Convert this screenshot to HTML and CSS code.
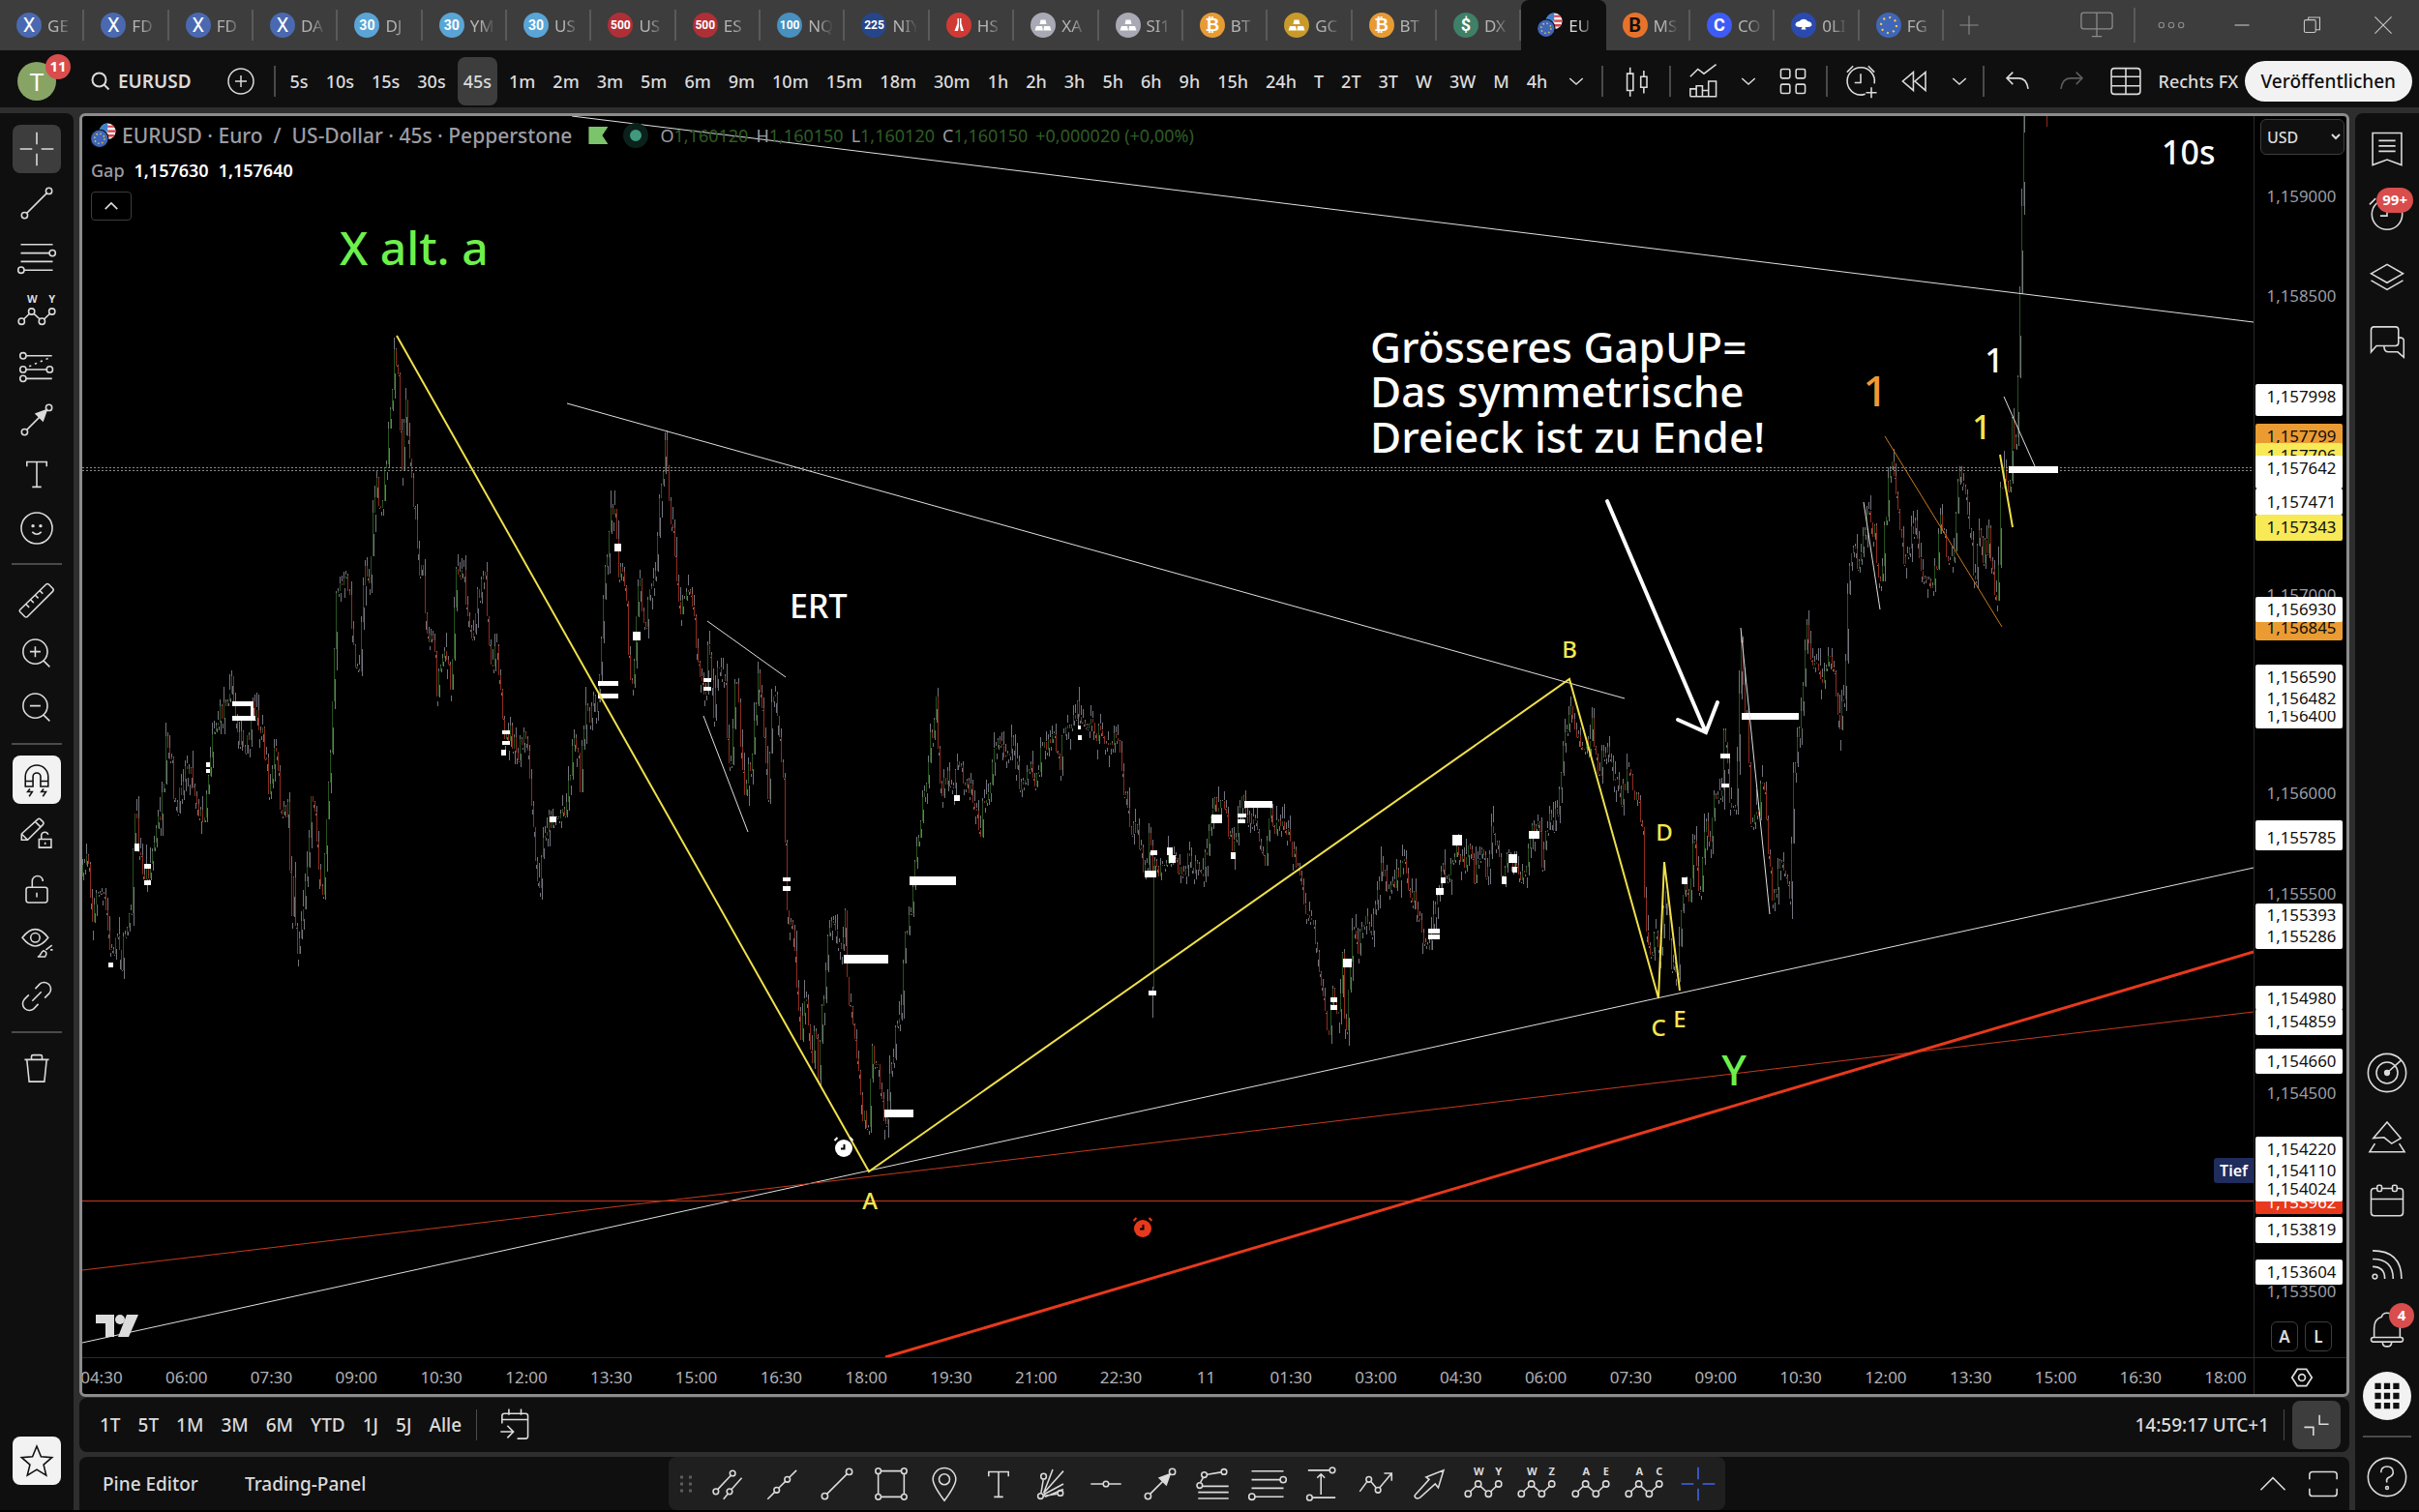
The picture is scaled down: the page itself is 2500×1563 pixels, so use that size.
FILE: index.html
```
<!DOCTYPE html>
<html lang="de">
<head>
  <meta charset="UTF-8">
  <meta name="viewport" content="width=device-width, initial-scale=1.0">
  <title>EURUSD 1,157642 – Rechts FX</title>
  <link rel="stylesheet" href="styles.css">
</head>
<body>

<!-- Icons -->
<svg class="sprite" aria-hidden="true">
  <symbol id="i-cross" viewBox="0 0 28 28"><path d="M14 3v8M14 17v8M3 14h8M17 14h8"/></symbol>
  <symbol id="i-line" viewBox="0 0 28 28"><circle cx="6" cy="22" r="2"/><circle cx="22" cy="6" r="2"/><path d="M7.4 20.6 20.6 7.4"/></symbol>
  <symbol id="i-fib" viewBox="0 0 28 28"><path d="M3.5 5.6h21M3.5 11.2h19M3.5 16.8h21M5.5 22.4h19"/><circle cx="24.3" cy="11.2" r="2"/><circle cx="3.7" cy="22.4" r="2"/></symbol>
  <symbol id="i-wave" viewBox="0 0 28 28"><circle cx="4" cy="20.5" r="2"/><circle cx="10.6" cy="14" r="2"/><circle cx="17.4" cy="20.5" r="2"/><circle cx="24" cy="14" r="2"/><path d="m5.4 19.1 3.8-3.7M12 15.4l4 3.7M18.8 19.1l3.8-3.7"/></symbol>
  <symbol id="i-proj" viewBox="0 0 28 28"><circle cx="5" cy="7.5" r="2"/><circle cx="5" cy="16.5" r="2"/><circle cx="5" cy="22.5" r="2"/><circle cx="22.5" cy="16.5" r="2"/><path d="M7 7.5h17M7 16.5h13.5M7 22.5h17"/><path d="M9 14.5 23 8.5" stroke-dasharray="1.5 2.5"/></symbol>
  <symbol id="i-arrow" viewBox="0 0 28 28"><circle cx="6" cy="22" r="2"/><circle cx="22" cy="6" r="2"/><path d="M7.4 20.6 20.6 7.4"/><path d="m20.5 7.5-7 2.5 4.5 4.5z" fill="currentColor"/></symbol>
  <symbol id="i-text" viewBox="0 0 28 28"><path d="M7.5 9V6h13v3M14 6v16.5M11 22.5h6"/></symbol>
  <symbol id="i-smile" viewBox="0 0 28 28"><circle cx="14" cy="14" r="10.2"/><path d="M11 16.5q3 3 6 0"/><circle cx="11.5" cy="12.5" r=".6" fill="currentColor"/><circle cx="16.5" cy="12.5" r=".6" fill="currentColor"/></symbol>
  <symbol id="i-ruler" viewBox="0 0 28 28"><path d="m3 20.500 17-16.500q1-1 2 0l2.500 2.500q1 1 0 2L8 25q-1 1-2 0l-3-3q-.7-.8 0-1.500zM7 17l2 2M10 14l2 2M13 11l2 2M16 8l2 2"/></symbol>
  <symbol id="i-zoomin" viewBox="0 0 28 28"><circle cx="13" cy="12.500" r="8"/><path d="m18.500 18.500 4 4M13 9v7M9.500 12.500h7"/></symbol>
  <symbol id="i-zoomout" viewBox="0 0 28 28"><circle cx="13" cy="12.500" r="8"/><path d="m18.500 18.500 4 4M9.500 12.500h7"/></symbol>
  <symbol id="i-magnet" viewBox="0 0 28 28"><path d="M6.500 18.500V12a7.500 7.500 0 0 1 15 0v6.500h-5V12a2.500 2.500 0 0 0-5 0v6.500zM6.500 15h5M16.500 15h5M9.500 20l-1.500 2h3l-2 3M18.500 20l-1.500 2h3l-2 3"/></symbol>
  <symbol id="i-penlock" viewBox="0 0 28 28"><path d="M4 14 14.500 4.500q1-1 2 0l1.500 1.500q1 1 0 2L8 18H4zM4 14l4 4M13 6l3.500 3.500M15.500 17.500h8v5.500h-8zM17 17.500v-2.500a2.300 2.300 0 0 1 4.500-.5M19.500 19.500v1.500"/></symbol>
  <symbol id="i-lock" viewBox="0 0 28 28"><rect x="7" y="13.500" width="14" height="10" rx="1.500"/><path d="M11 13.500V9.500a3.500 3.500 0 0 1 7 0M14 17v3"/></symbol>
  <symbol id="i-eye" viewBox="0 0 28 28"><path d="M4.500 11Q13 0 21.500 11 13 22 4.500 11z"/><circle cx="13" cy="11" r="3"/><path d="M14.500 23.500c2 0 2-3 4-4q3 1 1 4zM20 19l4-3M23 19h1.500"/></symbol>
  <symbol id="i-link" viewBox="0 0 28 28"><path d="m11 17 6-6M13 9l3-3.200a4.400 4.400 0 0 1 6.200 6.200l-3 3M15 19l-3 3.200A4.400 4.400 0 0 1 5.800 16l3-3"/></symbol>
  <symbol id="i-trash" viewBox="0 0 28 28"><path d="M6 8.500h16M10.500 8.500v-2q0-1 1-1h5q1 0 1 1v2M7.500 8.500 9 23h10l1.500-14.500"/></symbol>
  <symbol id="i-star" viewBox="0 0 28 28"><path d="m14 4.500 2.800 6.800 7.200.6-5.500 4.700 1.700 7-6.200-3.800-6.200 3.800 1.700-7L4 11.900l7.200-.6z"/></symbol>
  <symbol id="i-chev" viewBox="0 0 16 16"><path d="m3.500 6 4.500 4 4.500-4"/></symbol>
  <symbol id="i-up" viewBox="0 0 28 28"><path d="m6 18 8-8 8 8"/></symbol>
  <symbol id="i-search" viewBox="0 0 20 20"><circle cx="8.500" cy="8.500" r="7"/><path d="m13.500 13.500 5 5"/></symbol>
  <symbol id="i-plus" viewBox="0 0 28 28"><circle cx="14" cy="14" r="13"/><path d="M14 8v12M8 14h12"/></symbol>
  <symbol id="i-candle" viewBox="0 0 28 28"><path d="M8 9h4v11H8zM10 5v4M10 20v4M17 11h4v7h-4zM19 7v4M19 18v4"/></symbol>
  <symbol id="i-indic" viewBox="0 0 28 28"><path d="m5 11 5-5 4 3 8-6M5 24v-5h4v5M9 24v-7h4v7M13 24v-4h4v4M17 24V14h5v10zM5 24h13"/></symbol>
  <symbol id="i-grid" viewBox="0 0 28 28"><rect x="6" y="6" width="6" height="6" rx="1"/><rect x="16" y="6" width="6" height="6" rx="1"/><rect x="6" y="16" width="6" height="6" rx="1"/><rect x="16" y="16" width="6" height="6" rx="1"/></symbol>
  <symbol id="i-alarm" viewBox="0 0 28 28"><path d="M17 22.500a9 9 0 1 1 6-7M14 9v6h-4M5 8l4-4M23 8l-4-4M21 18v7M17.500 21.500h7"/></symbol>
  <symbol id="i-rewind" viewBox="0 0 28 28"><path d="m13 8-7 6 7 6zM21 8l-7 6 7 6z"/></symbol>
  <symbol id="i-undo" viewBox="0 0 28 28"><path d="m11 8-4 4 4 4M7 12h8q5 0 6 7"/></symbol>
  <symbol id="i-redo" viewBox="0 0 28 28"><path d="m17 8 4 4-4 4M21 12h-8q-5 0-6 7"/></symbol>
  <symbol id="i-layout" viewBox="0 0 28 28"><rect x="4.500" y="5.500" width="19" height="17" rx="2"/><path d="M14 5.500v17M4.500 11h19M4.500 17h19"/></symbol>
  <symbol id="i-list" viewBox="0 0 28 28"><path d="M4.500 3.500h19v21L14 21l-9.500 3.500zM8.500 8.500h11M8.500 12h11M8.500 15.500h11"/></symbol>
  <symbol id="i-clock" viewBox="0 0 28 28"><circle cx="14" cy="15" r="10"/><path d="M14 10v6H9.500M2.500 8.500l4-4M25.500 8.500l-4-4"/></symbol>
  <symbol id="i-layers" viewBox="0 0 28 28"><path d="m3.500 12 10.500-6 10.500 6L14 18zM3.500 16.500 14 22.500l10.500-6"/></symbol>
  <symbol id="i-chat" viewBox="0 0 28 28"><path d="M3.500 21.500V7q0-2 2-2h14q2 0 2 2v8.500q0 2-2 2H7zM21.500 12q3.500 0 3.500 2v11l-4-3.500h-6q-3 0-3-4"/></symbol>
  <symbol id="i-radar" viewBox="0 0 28 28"><circle cx="14" cy="14" r="12.500"/><circle cx="14" cy="14" r="7"/><circle cx="14" cy="14" r="1.500" fill="currentColor"/><path d="m14 14 9-8"/></symbol>
  <symbol id="i-hill" viewBox="0 0 28 28"><path d="m5 15 9-10.500L23 15 17 18.500l-5-4zM6 18.500 2.500 24h23L22 18.500"/></symbol>
  <symbol id="i-cal" viewBox="0 0 28 28"><rect x="3.500" y="6" width="21" height="18" rx="2"/><path d="M3.500 13h21"/><rect x="7.500" y="4" width="3" height="4" rx="1" fill="#0f0f0f"/><rect x="17.500" y="4" width="3" height="4" rx="1" fill="#0f0f0f"/></symbol>
  <symbol id="i-feed" viewBox="0 0 28 28"><circle cx="6" cy="22" r="1.500"/><path d="M4.500 15.500q8 0 8 8M4.500 10.500q13.500 0 13.500 13M4.500 5q19 0 19 18.500"/></symbol>
  <symbol id="i-bell" viewBox="0 0 28 28"><path d="M5.500 20v-6q0-6 5-7.500Q11 4 14 4t3.500 2.500q5 1.500 5 7.500v6"/><rect x="3.500" y="20" width="21" height="3" rx="1.500"/><path d="M11 23q0 3 3 3t3-3"/></symbol>
  <symbol id="i-help" viewBox="0 0 28 28"><circle cx="14" cy="14" r="12.500"/><path d="M10 11q0-4 4-4t4 4q0 2-2.500 3T14 17.500"/><circle cx="14" cy="21" r=".9"/></symbol>
  <symbol id="i-goto" viewBox="0 0 28 28"><path d="M5 13V8q0-1.500 1.500-1.500h14Q22 6.500 22 8v13.500q0 1.500-1.500 1.500H15M5 10.500h17M9.500 3.500v4M17.500 3.500v4M4 18.500h8M8.500 14.500l4 4-4 4"/></symbol>
  <symbol id="i-min" viewBox="0 0 28 28"><path d="M16 7.500v6h6M12 21v-5.500H6"/></symbol>
  <symbol id="i-full" viewBox="0 0 28 28"><path d="M5 11V8q0-2 2-2h14q2 0 2 2v3M5 17v3q0 2 2 2h14q2 0 2-2v-3"/></symbol>
  <symbol id="i-channel" viewBox="0 0 28 28"><circle cx="5" cy="19" r="1.800"/><circle cx="16" cy="7" r="1.800"/><circle cx="14" cy="19" r="1.800"/><path d="m6.200 17.600 8.600-9.200M10 24l3-3.600M15.200 17.600 22 10"/></symbol>
  <symbol id="i-ray" viewBox="0 0 28 28"><circle cx="10" cy="18" r="1.800"/><circle cx="17" cy="11" r="1.800"/><path d="m4 24 4.700-4.700M11.300 16.700l4.400-4.400M18.300 9.700 23 5"/></symbol>
  <symbol id="i-rect" viewBox="0 0 28 28"><path d="M7.500 5.500h13M7.500 22.500h13M5.500 7.500v13M22.500 7.500v13"/><circle cx="5.500" cy="5.500" r="1.800"/><circle cx="22.500" cy="5.500" r="1.800"/><circle cx="5.500" cy="22.500" r="1.800"/><circle cx="22.500" cy="22.500" r="1.800"/></symbol>
  <symbol id="i-pin" viewBox="0 0 28 28"><path d="M14 25Q6.500 15 6.500 11a7.500 7.500 0 0 1 15 0Q21.500 15 14 25z"/><circle cx="14" cy="11" r="3.500"/></symbol>
  <symbol id="i-fan" viewBox="0 0 28 28"><circle cx="6" cy="22" r="1.800"/><circle cx="8" cy="9" r="1.800"/><circle cx="19" cy="20" r="1.800"/><path d="M6.300 20 7.800 11M8 20 14 4.500M8 20 21 5.500M8 21 21 14M8 22l9-1.500M9 22.500l12-5"/></symbol>
  <symbol id="i-hray" viewBox="0 0 28 28"><circle cx="14" cy="14" r="1.800"/><path d="M4 14h8M16 14h8"/></symbol>
  <symbol id="i-fibx" viewBox="0 0 28 28"><circle cx="5" cy="15" r="1.800"/><circle cx="8" cy="8" r="1.800"/><circle cx="21" cy="6" r="1.800"/><path d="M10 7.800l9-1.500M5.500 13l2-3.500M7 15.500h17M4 19.500h20M4 23.500h20"/></symbol>
  <symbol id="i-range" viewBox="0 0 28 28"><circle cx="21" cy="5" r="1.800"/><circle cx="6" cy="23" r="1.800"/><path d="M5 5h14M8 23h15M13.500 7.500V21M11 10l2.500-2.500L16 10"/></symbol>
  <symbol id="i-zig" viewBox="0 0 28 28"><circle cx="10" cy="11" r="1.800"/><circle cx="16" cy="18" r="1.800"/><path d="m4 19 4.800-6.500M11.500 12.500l3.300 4M17 16.500 25 7M20 7h5v5"/></symbol>
  <symbol id="i-fat" viewBox="0 0 28 28"><path d="M5 23q-1-1 0-2l9-10-2-1.500L23.500 5 20 16.500 18 14 8 23q-2 1-3 0z"/></symbol>
  <symbol id="i-alarmdot" viewBox="0 0 24 24"><circle cx="12" cy="13" r="9" fill="currentColor" stroke="none"/><path d="M12.500 9v4.500H9" stroke="#000" stroke-width="2"/><path d="m2.500 5 3-3M21.500 5l-3-3" stroke-width="2"/></symbol>
  <symbol id="i-eu" viewBox="0 0 26 26"><circle cx="13" cy="13" r="13" fill="#3f66b8" stroke="none"/><circle cx="13" cy="13" r="8" stroke="#f2c94c" stroke-width="2.200" stroke-dasharray="2 4.280"/></symbol>
  <symbol id="i-eurusd" viewBox="0 0 28 28"><g stroke="none"><circle cx="18.500" cy="9.500" r="9" fill="#eee"/><path d="M18.500 3h6.200l1.700 2.200h-8zM18.500 8h9v2.500h-9zM18.500 13h8l-1.500 2.500h-6.500z" fill="#d9434a"/><path d="M18.500.5v9h-9a9 9 0 0 1 9-9z" fill="#3f7fd0"/><circle cx="9.500" cy="17.500" r="10.500" fill="#0f0f0f"/><circle cx="9.500" cy="17.500" r="9.300" fill="#3f66b8"/></g><circle cx="9.500" cy="17.500" r="5.500" stroke="#f2c94c" stroke-width="1.600" stroke-dasharray="1.500 2.820"/></symbol>
  <symbol id="i-bars" viewBox="0 0 26 26"><path d="M10.500 7.500h5l1 4.500h-7zM6 14h6l1 4.500H4.500zM14 14h6l1.500 4.500h-8z" fill="#fff" stroke="none"/></symbol>
</svg>

<nav class="tabbar" aria-label="Tabs">
  <div class="tabs">
    <a class="tab" href="#"><i class="coin x">X</i><span>GE</span></a>
    <a class="tab" href="#"><i class="coin x">X</i><span>FD</span></a>
    <a class="tab" href="#"><i class="coin x">X</i><span>FD</span></a>
    <a class="tab" href="#"><i class="coin x">X</i><span>DA</span></a>
    <a class="tab" href="#"><i class="coin dow">30</i><span>DJ</span></a>
    <a class="tab" href="#"><i class="coin dow">30</i><span>YM</span></a>
    <a class="tab" href="#"><i class="coin dow">30</i><span>US</span></a>
    <a class="tab" href="#"><i class="coin spx">500</i><span>US</span></a>
    <a class="tab" href="#"><i class="coin spx">500</i><span>ES</span></a>
    <a class="tab" href="#"><i class="coin ndx">100</i><span>NQ</span></a>
    <a class="tab" href="#"><i class="coin nik">225</i><span>NIY</span></a>
    <a class="tab" href="#"><i class="coin hsi"><svg class="coin-svg" viewBox="0 0 26 26"><path d="M11.500 6v5l-3 8h3.500l1-5V6zM14 6v8l1 5h3l-2.500-8V6z" fill="#fff" stroke="none"/></svg></i><span>HS</span></a>
    <a class="tab" href="#"><i class="coin silver"><svg class="coin-svg"><use href="#i-bars"/></svg></i><span>XA</span></a>
    <a class="tab" href="#"><i class="coin silver"><svg class="coin-svg"><use href="#i-bars"/></svg></i><span>SI1</span></a>
    <a class="tab" href="#"><i class="coin btc">₿</i><span>BT</span></a>
    <a class="tab" href="#"><i class="coin gold"><svg class="coin-svg"><use href="#i-bars"/></svg></i><span>GC</span></a>
    <a class="tab" href="#"><i class="coin btc">₿</i><span>BT</span></a>
    <a class="tab" href="#"><i class="coin dxy">$</i><span>DX</span></a>
    <a class="tab active" href="#" aria-current="page"><svg class="pair"><use href="#i-eurusd"/></svg><span>EU</span></a>
    <a class="tab" href="#"><i class="coin mst">B</i><span>MS</span></a>
    <a class="tab" href="#"><i class="coin cb">C</i><span>CO</span></a>
    <a class="tab" href="#"><i class="coin oil"><svg class="coin-svg" viewBox="0 0 26 26"><path d="M4.500 13q0-3.500 4-4 4.500-4.500 9 0 4 .5 4 4-1 2-4 2h-3l1 2.500h-5l1-2.500h-3q-3 0-4-2z" fill="#fff" stroke="none"/></svg></i><span>0LI</span></a>
    <a class="tab" href="#"><i class="coin"><svg class="coin-svg"><use href="#i-eu"/></svg></i><span>FG</span></a>
  </div>
  <div class="window-tools">
    <button aria-label="Neuer Tab"><svg viewBox="0 0 28 28"><path d="M14 5v18M5 14h18"/></svg></button>
    <button class="screen" aria-label="Bildschirm"><svg viewBox="0 0 28 28"><rect x="1.500" y="4" width="25" height="13" rx="2"/><path d="M14 4v19M10 23h8"/></svg></button>
    <button aria-label="Mehr"><svg viewBox="0 0 28 28"><circle cx="4.500" cy="14" r="2.500"/><circle cx="14" cy="14" r="2.500"/><circle cx="23.500" cy="14" r="2.500"/></svg></button>
    <button class="win" aria-label="Minimieren"><svg viewBox="0 0 28 28"><path d="M7 14h14"/></svg></button>
    <button class="win" aria-label="Wiederherstellen"><svg viewBox="0 0 28 28"><rect x="6" y="9" width="11" height="12" rx="1.500"/><path d="M10 9V6.500h11v12h-4"/></svg></button>
    <button class="win" aria-label="Schließen"><svg viewBox="0 0 28 28"><path d="m6 6 16 16M22 6 6 22"/></svg></button>
  </div>
</nav>

<header class="toolbar">
  <button class="avatar" aria-label="Konto">T<span class="badge">11</span></button>
  <button class="symbol"><svg><use href="#i-search"/></svg>EURUSD</button>
  <button class="compare" aria-label="Vergleichen"><svg><use href="#i-plus"/></svg></button>
  <span class="sep"></span>
  <div class="intervals">
    <button>5s</button><button>10s</button><button>15s</button><button>30s</button><button class="on">45s</button><button>1m</button><button>2m</button><button>3m</button><button>5m</button><button>6m</button><button>9m</button><button>10m</button><button>15m</button><button>18m</button><button>30m</button><button>1h</button><button>2h</button><button>3h</button><button>5h</button><button>6h</button><button>9h</button><button>15h</button><button>24h</button><button>T</button><button>2T</button><button>3T</button><button>W</button><button>3W</button><button>M</button><button>4h</button>
    <button class="chev" aria-label="Mehr Intervalle"><svg><use href="#i-chev"/></svg></button>
  </div>
  <div class="tools">
    <span class="sep"></span>
    <button class="ico" aria-label="Kerzen"><svg><use href="#i-candle"/></svg></button>
    <span class="sep"></span>
    <button class="ico" aria-label="Indikatoren"><svg><use href="#i-indic"/></svg></button>
    <button class="chev" aria-label="Favoriten"><svg><use href="#i-chev"/></svg></button>
    <button class="ico" aria-label="Vorlagen"><svg><use href="#i-grid"/></svg></button>
    <span class="sep"></span>
    <button class="ico" aria-label="Alarm"><svg><use href="#i-alarm"/></svg></button>
    <button class="ico" aria-label="Replay"><svg><use href="#i-rewind"/></svg></button>
    <button class="chev" aria-label="Replay-Menü"><svg><use href="#i-chev"/></svg></button>
    <span class="sep"></span>
    <button class="ico" aria-label="Rückgängig"><svg><use href="#i-undo"/></svg></button>
    <button class="ico dim" aria-label="Wiederholen"><svg><use href="#i-redo"/></svg></button>
    <button class="ico" aria-label="Layout"><svg><use href="#i-layout"/></svg></button>
    <button class="layout-name">Rechts FX</button>
  </div>
  <button class="publish">Veröffentlichen</button>
</header>

<main class="workspace">
  <aside class="drawbar">
    <button class="on" aria-label="Fadenkreuz"><svg><use href="#i-cross"/></svg></button>
    <button aria-label="Trendlinie"><svg><use href="#i-line"/></svg></button>
    <button aria-label="Fibonacci"><svg><use href="#i-fib"/></svg></button>
    <button aria-label="Wellen"><svg viewBox="0 0 28 28"><use href="#i-wave"/><text class="wave-label" x="11" y="8">W</text><text class="wave-label" x="24" y="8">Y</text></svg></button>
    <button aria-label="Projektion"><svg><use href="#i-proj"/></svg></button>
    <button aria-label="Pfeil"><svg><use href="#i-arrow"/></svg></button>
    <button aria-label="Text"><svg><use href="#i-text"/></svg></button>
    <button aria-label="Symbole"><svg><use href="#i-smile"/></svg></button>
    <hr>
    <button aria-label="Messen"><svg><use href="#i-ruler"/></svg></button>
    <button aria-label="Vergrößern"><svg><use href="#i-zoomin"/></svg></button>
    <button aria-label="Verkleinern"><svg><use href="#i-zoomout"/></svg></button>
    <hr>
    <button class="lit" aria-label="Magnet"><svg><use href="#i-magnet"/></svg></button>
    <button aria-label="Zeichenmodus"><svg><use href="#i-penlock"/></svg></button>
    <button aria-label="Sperren"><svg><use href="#i-lock"/></svg></button>
    <button aria-label="Verbergen"><svg><use href="#i-eye"/></svg></button>
    <button aria-label="Verknüpfen"><svg><use href="#i-link"/></svg></button>
    <hr>
    <button aria-label="Löschen"><svg><use href="#i-trash"/></svg></button>
    <button class="lit last" aria-label="Favoriten"><svg><use href="#i-star"/></svg></button>
  </aside>

  <section class="center">
    <div class="chart">
      <div class="plot-wrap">
        <svg class="plot" viewBox="85 120 2244 1283" preserveAspectRatio="none">
          <g id="candles"></g>
          <g class="dots"><path d="M85 483.500H2329M85 486.500H2329"/></g>
          <g id="gaps"></g>
          <g class="w">
            <path d="M591 120 2329 333M586 417 1679 722M85 1388 2329 897"/>
            <path d="M731 642 812 700M727 740 773 860M1799 649 1829 945M1926 519 1943 630M2071 410 2103 482"/>
          </g>
          <path class="red" d="M85 1313 2329 1046M85 1241.500H2329"/>
          <path class="red thick" d="M915 1403 2329 984"/>
          <path class="orange" d="M1948 451 2069 648"/>
          <path class="yellow" d="M410 347 898 1211 1622 702 1714 1032 1720 891 1736 1024M2067 470 2080 545"/>
          <path class="big-arrow" d="M1661 518 1763 757M1734 744 1763 757 1775 726"/>
          <g class="notes">
            <text class="t48 green" x="351" y="274">X alt. a</text>
            <text class="t44" x="1416" y="375">Grösseres GapUP=</text>
            <text class="t44" x="1416" y="421">Das symmetrische</text>
            <text class="t44" x="1416" y="468">Dreieck ist zu Ende!</text>
            <text class="t34" x="2234" y="170">10s</text>
            <text class="t34" x="816" y="639">ERT</text>
            <text class="t44 o mid" x="1938" y="420">1</text>
            <text class="t34 y mid" x="2048" y="454">1</text>
            <text class="t34 mid" x="2061" y="385">1</text>
            <text class="t44 green mid" x="1792" y="1122">Y</text>
            <text class="t24 y mid" x="899" y="1250">A</text>
            <text class="t24 y mid" x="1622" y="680">B</text>
            <text class="t24 y mid" x="1714" y="1071">C</text>
            <text class="t24 y mid" x="1720" y="869">D</text>
            <text class="t24 y mid" x="1736" y="1062">E</text>
          </g>
          <use class="al-w" href="#i-alarmdot" x="860" y="1174" width="24" height="24"/>
          <use class="al-r" href="#i-alarmdot" x="1169" y="1257" width="24" height="24"/>
          <path class="logo" d="M99 1359h19v23h-9v-14H99zM131 1359h12l-10 23h-11z"/><circle class="logo" cx="124" cy="1364" r="5"/>
        </svg>
        <div class="legend">
          <div class="legend-row">
            <svg class="pair"><use href="#i-eurusd"/></svg>
            <span class="title">EURUSD · Euro&nbsp; / &nbsp;US-Dollar · 45s · Pepperstone</span>
            <span class="flag"></span><span class="dot"></span>
            <span class="ohlc"><span><b>O</b>1,160120</span><span><b>H</b>1,160150</span><span><b>L</b>1,160120</span><span><b>C</b>1,160150</span><span>+0,000020 (+0,00%)</span></span>
          </div>
          <div class="legend-row gap-row"><span>Gap</span><b>1,157630</b><b>1,157640</b></div>
          <button class="collapse" aria-label="Einklappen"><svg><use href="#i-up"/></svg></button>
        </div>
        <span class="low-tag">Tief</span>
      </div>
      <div class="price-axis">
        <svg id="prices" viewBox="2329 120 96 1283" preserveAspectRatio="none"></svg>
        <select class="currency" aria-label="Währung"><option>USD</option></select>
        <div class="scale-mode"><button>A</button><button>L</button></div>
      </div>
      <div class="time-axis">
        <div class="times">
          <span>04:30</span><span>06:00</span><span>07:30</span><span>09:00</span><span>10:30</span><span>12:00</span><span>13:30</span><span>15:00</span><span>16:30</span><span>18:00</span><span>19:30</span><span>21:00</span><span>22:30</span><span>11</span><span>01:30</span><span>03:00</span><span>04:30</span><span>06:00</span><span>07:30</span><span>09:00</span><span>10:30</span><span>12:00</span><span>13:30</span><span>15:00</span><span>16:30</span><span>18:00</span>
        </div>
      </div>
      <button class="axis-settings" aria-label="Einstellungen"><svg viewBox="0 0 28 28"><path d="M8.500 4h11L26 14l-6.500 10h-11L2 14z"/><circle cx="14" cy="14" r="4"/></svg></button>
    </div>

    <div class="rangebar">
      <button>1T</button><button>5T</button><button>1M</button><button>3M</button><button>6M</button><button>YTD</button><button>1J</button><button>5J</button><button>Alle</button>
      <span class="sep"></span>
      <button class="ico" aria-label="Gehe zu"><svg><use href="#i-goto"/></svg></button>
      <button class="clock">14:59:17 UTC+1</button>
      <span class="sep"></span>
      <button class="shrink" aria-label="Verkleinern"><svg><use href="#i-min"/></svg></button>
    </div>

    <footer class="bottombar">
      <div class="panels"><button>Pine Editor</button><button>Trading-Panel</button></div>
      <div class="favs">
        <svg class="handle" viewBox="0 0 14 20"><path d="M1 3h3M1 10h3M1 17h3M10 3h3M10 10h3M10 17h3"/></svg>
        <button aria-label="Kanal"><svg><use href="#i-channel"/></svg></button>
        <button aria-label="Gerade"><svg><use href="#i-ray"/></svg></button>
        <button aria-label="Trendlinie"><svg><use href="#i-line"/></svg></button>
        <button aria-label="Rechteck"><svg><use href="#i-rect"/></svg></button>
        <button aria-label="Pin"><svg><use href="#i-pin"/></svg></button>
        <button aria-label="Text"><svg><use href="#i-text"/></svg></button>
        <button aria-label="Fächer"><svg><use href="#i-fan"/></svg></button>
        <button aria-label="Horizontale"><svg><use href="#i-hray"/></svg></button>
        <button aria-label="Pfeil"><svg><use href="#i-arrow"/></svg></button>
        <button aria-label="Fib-Erweiterung"><svg><use href="#i-fibx"/></svg></button>
        <button aria-label="Fib-Retracement"><svg><use href="#i-fib"/></svg></button>
        <button aria-label="Preisspanne"><svg><use href="#i-range"/></svg></button>
        <button aria-label="Pfad"><svg><use href="#i-zig"/></svg></button>
        <button aria-label="Pfeilmarker"><svg><use href="#i-fat"/></svg></button>
        <button aria-label="WXY"><svg viewBox="0 0 28 28"><use href="#i-wave"/><text class="wave-label" x="11" y="8">W</text><text class="wave-label" x="24" y="8">Y</text></svg></button>
        <button aria-label="WXYXZ"><svg viewBox="0 0 28 28"><use href="#i-wave"/><text class="wave-label" x="11" y="8">W</text><text class="wave-label" x="24" y="8">Z</text></svg></button>
        <button aria-label="ABCDE"><svg viewBox="0 0 28 28"><use href="#i-wave"/><text class="wave-label" x="11" y="8">A</text><text class="wave-label" x="24" y="8">E</text></svg></button>
        <button aria-label="ABC"><svg viewBox="0 0 28 28"><use href="#i-wave"/><text class="wave-label" x="11" y="8">A</text><text class="wave-label" x="24" y="8">C</text></svg></button>
        <button class="blue" aria-label="Fadenkreuz"><svg><use href="#i-cross"/></svg></button>
      </div>
      <div class="panel-tools">
        <button class="ico" aria-label="Öffnen"><svg><use href="#i-up"/></svg></button>
        <button class="ico" aria-label="Maximieren"><svg><use href="#i-full"/></svg></button>
      </div>
    </footer>
  </section>

  <aside class="sidebar">
    <button aria-label="Watchlist"><svg><use href="#i-list"/></svg></button>
    <button aria-label="Alarme"><svg><use href="#i-clock"/></svg><span class="badge wide">99+</span></button>
    <button aria-label="Objektbaum"><svg><use href="#i-layers"/></svg></button>
    <button aria-label="Chats"><svg><use href="#i-chat"/></svg></button>
    <button class="push" aria-label="Screener"><svg><use href="#i-radar"/></svg></button>
    <button aria-label="Pine"><svg><use href="#i-hill"/></svg></button>
    <button aria-label="Kalender"><svg><use href="#i-cal"/></svg></button>
    <button aria-label="Feed"><svg><use href="#i-feed"/></svg></button>
    <button aria-label="Meldungen"><svg><use href="#i-bell"/></svg><span class="badge">4</span></button>
    <button class="apps" aria-label="Produkte"><svg viewBox="0 0 28 28"><path d="M6 7.500h4M12 7.500h4M18 7.500h4M6 14h4M12 14h4M18 14h4M6 20.500h4M12 20.500h4M18 20.500h4"/></svg></button>
    <hr>
    <button aria-label="Hilfe"><svg><use href="#i-help"/></svg></button>
  </aside>
</main>

<script src="chart.js"></script>
</body>
</html>
```
FILE: styles.css
```
* {
  box-sizing: border-box;
}
body {
  margin: 0;
  height: 100vh;
  display: flex;
  flex-direction: column;
  overflow: hidden;
  background: #2e2e2e;
  color: #dbdbdb;
  font-family: "Trebuchet MS", "Noto Sans", "Open Sans", sans-serif;
  font-size: 18px;
}
button {
  font: inherit;
  color: inherit;
  background: none;
  border: 0;
  padding: 0;
  margin: 0;
  cursor: pointer;
  white-space: nowrap;
}
svg {
  display: block;
  width: 44px;
  height: 44px;
  fill: none;
  stroke: currentColor;
  stroke-width: 1;
}
text {
  stroke: none;
  fill: currentColor;
}
.sprite {
  position: absolute;
  width: 0;
  height: 0;
}
.sep {
  flex: none;
  width: 2px;
  height: 32px;
  background: #4a4a4a;
}
hr {
  flex: none;
  width: 52px;
  height: 2px;
  border: 0;
  background: #4a4a4a;
}

/* Tabs */
.tabbar {
  flex: none;
  height: 52px;
  display: flex;
  background: #3d3d3d;
}
.tabs {
  flex: 1;
  display: grid;
  grid-template-columns: repeat(23, 1fr);
}
.tab {
  display: flex;
  align-items: center;
  gap: 6px;
  padding-left: 17px;
  overflow: hidden;
  color: #b4b4b4;
  font-size: 17px;
  text-decoration: none;
  background: linear-gradient(#5a5a5a, #5a5a5a) right center / 2px 32px no-repeat;
}
.tab span {
  width: 26px;
  overflow: hidden;
  -webkit-mask-image: linear-gradient(90deg, #000 40%, transparent);
  mask-image: linear-gradient(90deg, #000 40%, transparent);
}
.tab.active {
  background: #0f0f0f;
  border-radius: 8px 8px 0 0;
  color: #dbdbdb;
}
.coin {
  flex: none;
  width: 26px;
  height: 26px;
  border-radius: 50%;
  color: #fff;
  font: 700 12px/26px "Roboto", sans-serif;
  text-align: center;
}
.coin-svg {
  width: 26px;
  height: 26px;
}
.pair {
  flex: none;
  width: 26px;
  height: 26px;
}
.x { background: #4a69b0; font-size: 20px; font-weight: 400; }
.dow { background: #5aa5d6; font-size: 14px; }
.spx { background: #b02f36; }
.ndx { background: #4790bf; }
.nik { background: #26468a; }
.hsi { background: #cf3a35; }
.silver { background: #a9a9b5; }
.btc { background: #e89b33; font-size: 18px; }
.gold { background: #c99a2a; }
.dxy { background: #3f8068; font-size: 18px; }
.mst { background: #e9722a; color: #111; font-size: 20px; }
.cb { background: #3d5bf5; font-size: 18px; }
.oil { background: #2b4ab0; }
.window-tools {
  width: 491px;
  display: flex;
  align-items: center;
  color: #8c8c8c;
}
.window-tools svg {
  width: 30px;
  height: 30px;
}
.window-tools button {
  padding: 0 11px;
}
.window-tools .screen {
  margin-left: auto;
  padding-right: 20px;
  border-right: 2px solid #5a5a5a;
}
.window-tools .screen svg {
  width: 36px;
  height: 36px;
}
.window-tools button:nth-child(3) {
  padding: 0 22px;
}
.window-tools .win {
  width: 73px;
  padding: 0 21px;
  color: #c8c8c8;
}

/* Top toolbar */
.toolbar {
  flex: none;
  height: 59px;
  margin-bottom: 6px;
  padding: 5px 7px 0 18px;
  display: flex;
  align-items: center;
  background: #0f0f0f;
}
.avatar {
  position: relative;
  width: 40px;
  height: 40px;
  border-radius: 50%;
  background: #87a465;
  color: #fff;
  font-size: 26px;
  line-height: 40px;
}
.badge {
  position: absolute;
  top: -8px;
  right: -15px;
  min-width: 26px;
  height: 26px;
  padding: 0 4px;
  border-radius: 13px;
  background: #d94d4d;
  color: #fff;
  font-size: 15px;
  font-weight: 700;
  line-height: 25px;
  text-align: center;
}
.symbol {
  display: flex;
  align-items: center;
  gap: 8px;
  margin-left: 36px;
  font-weight: 600;
  font-size: 19px;
}
.symbol svg {
  width: 20px;
  height: 20px;
  stroke-width: 2;
}
.compare {
  margin: 0 20px 0 37px;
}
.compare svg {
  width: 28px;
  height: 28px;
  stroke-width: 1.5;
}
.intervals {
  display: flex;
  gap: 6px;
  margin-left: 9px;
}
.intervals button {
  height: 50px;
  padding: 0 6px;
  border-radius: 8px;
  font-weight: 500;
}
.intervals .on {
  background: #3d3d3d;
}
.chev {
  flex: none;
}
.chev svg {
  width: 24px;
  height: 24px;
}
.tools {
  display: flex;
  align-items: center;
  gap: 12px;
  margin-left: auto;
}
.dim {
  color: #5c5c5c;
}
.layout-name {
  width: 84px;
  overflow: hidden;
  text-align: left;
  font-weight: 500;
}
.publish {
  margin-left: 5px;
  height: 42px;
  padding: 0 17px;
  border-radius: 21px;
  background: #f2f2f2;
  color: #0f0f0f;
  font-size: 19px;
  font-weight: 500;
}

/* Workspace */
.workspace {
  flex: 1;
  min-height: 0;
  display: flex;
  gap: 6px;
  border-bottom: 2px solid #000;
}
.drawbar,
.sidebar {
  flex: none;
  display: flex;
  flex-direction: column;
  align-items: center;
  background: #0f0f0f;
}
.drawbar {
  width: 76px;
  padding: 12px 0 26px;
  gap: 6px;
  border-radius: 0 8px 0 0;
}
.drawbar button {
  flex: none;
  width: 50px;
  height: 50px;
  padding: 3px;
  border-radius: 8px;
}
.drawbar .on {
  background: #3d3d3d;
}
.drawbar .lit {
  background: #f2f2f2;
  color: #0f0f0f;
}
.drawbar .last {
  margin-top: auto;
}
.drawbar hr {
  margin: 5px 0;
}
.wave-label {
  font-size: 7px;
  font-weight: 700;
  text-anchor: middle;
}
.center {
  flex: 1;
  min-width: 0;
  display: flex;
  flex-direction: column;
}

/* Chart */
.chart {
  flex: 1;
  min-height: 0;
  display: grid;
  grid-template-columns: 1fr 96px;
  grid-template-rows: 1fr 38px;
  border: 3px solid #8c8c8c;
  border-radius: 6px;
  background: #000;
  overflow: hidden;
}
.plot-wrap,
.price-axis {
  position: relative;
  min-width: 0;
  min-height: 0;
}
.plot,
.price-axis > svg {
  position: absolute;
  width: 100%;
  height: 100%;
}
.price-axis {
  border-left: 1px solid #2a2a2a;
}
.wick { stroke: #74747e; stroke-width: 1; }
.up { stroke: #27521e; stroke-width: 1; }
.down { stroke: #8f2c1e; stroke-width: 1; }
.dots { stroke: #8a8a8a; stroke-dasharray: 2 2; }
.gap { fill: #fff; stroke: none; }
.w { stroke: #e0e0e0; }
.red { stroke: #c83a20; stroke-width: 1; }
.thick { stroke: #e8391c; stroke-width: 3; }
.orange { stroke: #c97a20; stroke-width: 1; }
.yellow { stroke: #efe04a; stroke-width: 2; }
.big-arrow { stroke: #fff; stroke-width: 4; stroke-linecap: round; }
.notes { color: #fff; font-weight: 500; }
.t48 { font-size: 48px; }
.t44 { font-size: 44px; }
.t34 { font-size: 34px; }
.t24 { font-size: 24px; }
.mid { text-anchor: middle; }
.green { fill: #6ef04c; }
.o { fill: #f09a36; }
.y { fill: #f5e650; }
.al-w { color: #fff; }
.al-r { color: #e8391c; }
.logo { fill: #dbdbdb; stroke: none; }
.legend {
  position: relative;
  padding: 4px 0 0 9px;
}
.legend-row {
  display: flex;
  align-items: center;
  height: 32px;
  color: #9c9ca3;
}
.title {
  margin-left: 6px;
  font-size: 21px;
  font-weight: 500;
  white-space: nowrap;
}
.flag {
  margin-left: 17px;
  width: 20px;
  height: 18px;
  background: #7cc46b;
  clip-path: polygon(0 0, 100% 0, 70% 50%, 100% 100%, 0 100%);
}
.dot {
  margin: 0 12px 0 16px;
  width: 26px;
  height: 26px;
  border: 7px solid #0c211c;
  border-radius: 50%;
  background: #3f9a7e;
}
.ohlc {
  display: flex;
  gap: 8px;
  color: #2f5c25;
  font-size: 18px;
}
.ohlc b {
  color: #9c9ca3;
  font-weight: 400;
}
.gap-row {
  height: 40px;
  gap: 10px;
  font-size: 18px;
  font-weight: 500;
}
.gap-row b {
  color: #fff;
  font-weight: 600;
}
.collapse {
  width: 42px;
  height: 30px;
  margin-top: 2px;
  padding: 3px 9px;
  border: 1px solid #3d3d3d;
  border-radius: 4px;
}
.collapse svg {
  width: 22px;
  height: 22px;
  stroke-width: 2;
}
.low-tag {
  position: absolute;
  right: 0;
  bottom: 14%;
  padding: 0 6px;
  border-radius: 3px 0 0 3px;
  background: #1f2c5c;
  color: #fff;
  font-size: 16px;
  font-weight: 600;
  line-height: 26px;
}
.price {
  font-size: 17px;
  text-anchor: middle;
  fill: #9c9ca3;
}
.currency {
  position: absolute;
  top: 3px;
  left: 6px;
  width: 87px;
  height: 37px;
  padding-left: 2px;
  border: 1px solid #3d3d3d;
  border-radius: 6px;
  background: #0f0f0f;
  color: #dbdbdb;
  font: 500 16px "Noto Sans", sans-serif;
}
.scale-mode {
  position: absolute;
  bottom: 6px;
  left: 17px;
  display: flex;
  gap: 7px;
}
.scale-mode button {
  width: 28px;
  height: 31px;
  border: 1px solid #3d3d3d;
  border-radius: 6px;
  font-size: 17px;
  font-weight: 600;
}
.time-axis {
  overflow: hidden;
  border-top: 1px solid #2a2a2a;
}
.times {
  display: grid;
  grid-template-columns: repeat(26, 1fr);
  margin: 0 -15px 0 -24px;
  color: #b0b0b6;
  font-size: 17px;
  line-height: 40px;
  text-align: center;
}
.axis-settings {
  border-left: 1px solid #2a2a2a;
  border-top: 1px solid #2a2a2a;
  padding: 3px 0 0 37px;
}
.axis-settings svg {
  width: 24px;
  height: 24px;
  stroke-width: 2;
}

/* Range bar and footer */
.rangebar,
.bottombar {
  flex: none;
  background: #0f0f0f;
  border-radius: 8px;
  font-size: 19px;
}
.rangebar {
  height: 56px;
  margin: 1px 0 5px;
  padding: 0 9px 0 12px;
  display: flex;
  align-items: center;
}
.rangebar button {
  padding: 0 9px;
  font-weight: 500;
}
.rangebar .ico {
  padding: 0 10px;
}
.rangebar .sep {
  margin: 0 8px 0 6px;
  width: 1px;
}
.rangebar .clock {
  margin-left: auto;
}
.rangebar .shrink {
  width: 50px;
  height: 50px;
  padding: 3px;
  border-radius: 8px;
  background: #3d3d3d;
}
.bottombar {
  height: 55px;
  display: grid;
  grid-template-columns: 609px minmax(0, 1092px) 1fr;
  border-radius: 8px 8px 0 0;
}
.panels {
  display: flex;
  gap: 48px;
  padding-left: 24px;
  font-weight: 500;
}
.favs {
  display: flex;
  align-items: center;
  padding-left: 11px;
  border-radius: 8px;
  background: #1f1f1f;
}
.favs .handle {
  flex: none;
  width: 14px;
  height: 20px;
  margin-right: 10px;
  color: #5c5c5c;
  stroke-width: 3;
}
.favs button {
  flex: 1;
}
.favs button svg {
  margin: auto;
}
.favs .blue {
  color: #4166ee;
}
.panel-tools {
  display: flex;
  align-items: center;
  justify-content: flex-end;
  gap: 8px;
  padding-right: 5px;
}

/* Right sidebar */
.sidebar {
  width: 66px;
  padding: 12px 0 9px;
  gap: 16px;
  border-radius: 8px 0 0 0;
}
.sidebar button {
  position: relative;
  flex: none;
  width: 50px;
  height: 50px;
  padding: 3px;
}
.sidebar .push {
  margin-top: auto;
}
.sidebar .badge {
  top: -1px;
  right: -3px;
}
.sidebar .wide {
  right: -2px;
  padding: 0 6px;
}
.sidebar .apps {
  margin-top: 4px;
  border-radius: 50%;
  background: #f2f2f2;
  color: #0f0f0f;
}
.apps svg {
  stroke-width: 4;
}
.sidebar hr {
  width: 50px;
  margin: 0;
}
```
FILE: chart.js
```
// Stützpunkte des Kursverlaufs: x, y
const track = [
  85,906, 90,873, 95,948, 101,918, 108,936, 114,991, 122,960, 125,997, 130,954, 135,933, 139,836, 144,882, 147,906, 154,897,
  158,876, 164,845, 169,821, 171,773, 177,794, 182,848, 189,797, 195,788, 202,821, 209,854, 215,797, 219,754, 228,739, 238,703,
  244,748, 253,782, 262,730, 271,760, 278,821, 284,770, 291,851, 298,827, 300,960, 303,912, 307,985, 315,918, 322,809, 333,936,
  338,821, 342,748, 347,609, 360,603, 367,700, 371,688, 376,573, 381,603, 388,494, 392,536, 399,476, 404,415, 408,355, 411,391,
  415,476, 419,415, 422,457, 427,524, 434,597, 437,591, 442,670, 446,645, 451,712, 458,663, 466,718, 470,585, 478,591, 487,663,
  491,627, 501,597, 507,688, 513,657, 519,754, 520,779, 526,754, 534,785, 542,760, 547,803, 552,882, 556,927, 562,857, 570,845,
  577,845, 585,827, 594,751, 599,809, 604,742, 613,730, 616,736, 621,657, 626,573, 631,530, 635,518, 638,591, 643,579, 647,633,
  652,730, 660,597, 666,657, 671,603, 678,579, 682,500, 687,461, 692,524, 698,585, 703,639, 712,597, 718,651, 724,700, 728,730,
  732,657, 737,742, 742,688, 748,694, 754,809, 760,688, 768,821, 776,785, 783,694, 789,766, 793,827, 797,718, 803,736, 810,827,
  813,942, 820,966, 826,1075, 833,1027, 839,1106, 842,1051, 845,1106, 853,997, 858,942, 868,991, 873,948, 873,987, 877,1033,
  883,1082, 891,1151, 898,1159, 900,1090, 907,1094, 914,1167, 924,1075, 930,1048, 934,968, 940,949, 945,887, 948,864, 955,815,
  961,769, 967,730, 971,815, 979,803, 985,826, 988,788, 998,803, 1006,826, 1013,855, 1018,811, 1022,838, 1026,765, 1039,776,
  1045,765, 1053,807, 1064,799, 1070,815, 1077,769, 1092,769, 1094,795, 1097,769, 1108,753, 1113,734, 1118,746, 1128,750,
  1141,765, 1148,761, 1156,780, 1161,815, 1169,853, 1177,868, 1183,903, 1187,864, 1191,895, 1197,895, 1210,880, 1217,899,
  1225,899, 1230,883, 1240,914, 1248,868, 1253,841, 1261,822, 1268,853, 1273,883, 1278,853, 1284,828, 1294,853, 1299,853,
  1307,895, 1313,838, 1319,860, 1330,853, 1337,887, 1345,926, 1353,949, 1360,975, 1366,1025, 1372,1067, 1377,1029, 1383,1048,
  1387,994, 1390,1075, 1393,1014, 1398,956, 1401,983, 1408,952, 1417,964, 1427,891, 1434,914, 1444,906, 1449,891, 1457,918,
  1465,949, 1477,979, 1483,933, 1491,899, 1496,922, 1504,868, 1512,899, 1517,864, 1523,903, 1530,883, 1536,899, 1542,845,
  1549,887, 1554,910, 1558,880, 1567,901, 1574,899, 1582,864, 1589,845, 1594,895, 1600,845, 1605,857, 1611,822, 1615,769,
  1622,723, 1627,759, 1635,780, 1645,754, 1652,795, 1660,769, 1667,795, 1674,826, 1684,790, 1690,826, 1697,846, 1698,912,
  1704,1004, 1710,963, 1715,999, 1721,922, 1727,994, 1733,1014, 1737,933, 1742,897, 1745,938, 1750,846, 1756,933, 1761,856,
  1767,866, 1771,820, 1779,820, 1782,734, 1787,841, 1794,820, 1799,667, 1804,749, 1806,754, 1809,851, 1816,841, 1822,800,
  1827,876, 1832,943, 1839,882, 1844,907, 1849,933, 1853,800, 1858,749, 1863,708, 1867,652, 1872,683, 1883,713, 1892,678,
  1901,759, 1907,688, 1909,616, 1913,570, 1921,581, 1930,530, 1937,555, 1943,611, 1948,540, 1954,463, 1958,499, 1968,586,
  1978,540, 1984,586, 1993,606, 2000,591, 2005,540, 2013,581, 2019,570, 2024,479, 2030,504, 2041,601, 2044,540, 2048,576,
  2055,555, 2064,632, 2067,514, 2071,479, 2076,524, 2079,428, 2082,468, 2086,376, 2087,300, 2090,180, 2092,122
];

// fester Startwert, damit der Chart immer gleich aussieht
let seed = 7;
function rnd() {
  seed = (seed * 16807) % 2147483647;
  return seed / 2147483647;
}

const paths = { wick: '', up: '', down: '' };
let i = 0;
let last = track[1];
for (let x = 85; x < 2092; x += 2) {
  while (i + 4 < track.length && track[i + 2] < x) i += 2;
  const x0 = track[i], y0 = track[i + 1], x1 = track[i + 2], y1 = track[i + 3];
  const t = x1 > x0 ? Math.min(1, (x - x0) / (x1 - x0)) : 1;
  const y = y0 + (y1 - y0) * t + (rnd() - 0.5) * 24;
  const top = Math.min(y, last) - rnd() * rnd() * 24;
  const bottom = Math.max(y, last) + rnd() * rnd() * 24;
  // Docht leicht versetzt neben dem Körper
  paths.wick += `M${x + 0.5} ${top.toFixed(0)}V${((top + y + last) / 3).toFixed(0)}M${x + 1.5} ${((bottom + y) / 2).toFixed(0)}V${bottom.toFixed(0)}`;
  paths[y < last ? 'up' : 'down'] += `M${x + 0.5} ${last.toFixed(0)}V${y.toFixed(0)}`;
  last = y;
}
paths.wick += 'M1191.500 1020V1052M2092.500 120V137';
paths.up += 'M1192.500 895V1022M2091.500 120V190';
paths.down += 'M2115.500 120V131';
document.getElementById('candles').innerHTML =
  Object.keys(paths).map(k => `<path class="${k}" d="${paths[k]}"/>`).join('');

// Gap-Markierungen: x, y, Breite, Höhe
const gaps = [
  [112,995,5,5], [139,872,5,8], [149,893,7,5], [149,910,7,5], [213,788,4,5], [213,795,4,4],
  [240,725,22,5], [259,725,3,20], [240,740,24,5], [519,755,8,4], [519,766,8,4], [518,775,5,6], [568,844,7,6],
  [635,562,7,8], [654,653,8,9], [618,704,21,5], [618,717,21,5], [727,701,8,4], [727,710,8,4],
  [809,907,8,4], [809,916,8,5], [872,987,46,9], [940,906,48,9], [914,1147,30,8], [986,822,6,6],
  [1114,750,3,4], [1114,760,4,5], [1189,879,7,5], [1183,900,12,7], [1206,876,6,8], [1208,884,7,8],
  [1187,1024,8,5], [1252,842,11,9], [1279,841,9,4], [1279,847,8,4], [1286,828,29,7], [1272,881,5,7],
  [1375,1031,7,5], [1375,1039,7,5], [1388,991,9,9], [1476,960,12,5], [1476,966,12,5], [1484,918,8,7],
  [1489,907,5,6], [1501,863,10,11], [1580,859,11,8], [1559,883,9,9], [1552,906,5,8], [1563,896,5,6],
  [1738,907,6,7], [1778,779,10,5], [1779,810,8,4], [1800,737,59,7], [2076,482,51,7]
];
document.getElementById('gaps').innerHTML =
  gaps.map(g => `<rect class="gap" x="${g[0]}" y="${g[1]}" width="${g[2]}" height="${g[3]}"/>`).join('');

// Preisachse: Text, Mitte, Farbe, oben, unten. Spätere Einträge liegen oben.
const labels = [
  ['1,159000', 203], ['1,158500', 306], ['1,157000', 615], ['1,156000', 820],
  ['1,155500', 924], ['1,154500', 1130], ['1,153500', 1335],
  ['1,157998', 410, '#fff', 397, 430],
  ['1,157799', 451, '#ea9c33', 438, 465],
  ['1,157706', 471, '#f8e957', 458, 484],
  ['1,157642', 484, '#fff', 471, 505],
  ['1,157471', 519, '#fff', 505, 532],
  ['1,157343', 545, '#f8e957', 532, 559],
  ['1,156845', 649, '#ea9c33', 636, 662],
  ['1,156930', 630, '#fff', 617, 643],
  ['1,156400', 740, '#fff', 726, 753],
  ['1,156590', 700, '#fff', 687, 713],
  ['1,156482', 722, '#fff', 709, 735],
  ['1,155785', 866, '#fff', 848, 879],
  ['1,155393', 946, '#fff', 934, 960],
  ['1,155286', 968, '#fff', 956, 981],
  ['1,154980', 1032, '#fff', 1019, 1044],
  ['1,154859', 1056, '#fff', 1043, 1070],
  ['1,154660', 1097, '#fff', 1084, 1110],
  ['1,153962', 1243, '#e8391c', 1229, 1255, '#fff'],
  ['1,154024', 1229, '#fff', 1216, 1242],
  ['1,154220', 1188, '#fff', 1175, 1201],
  ['1,154110', 1210, '#fff', 1197, 1223],
  ['1,153819', 1271, '#fff', 1258, 1285],
  ['1,153604', 1315, '#fff', 1302, 1328]
];
document.getElementById('prices').innerHTML = labels.map(([text, y, color, top, bottom, ink]) => {
  const box = color ? `<rect x="2330" y="${top}" width="91" height="${bottom - top}" rx="2" fill="${color}" stroke="none"/>` : '';
  const fill = color ? ` style="fill:${ink || '#0f0f0f'}"` : '';
  return `${box}<text class="price" x="2378" y="${y + 6}"${fill}>${text}</text>`;
}).join('');
```
